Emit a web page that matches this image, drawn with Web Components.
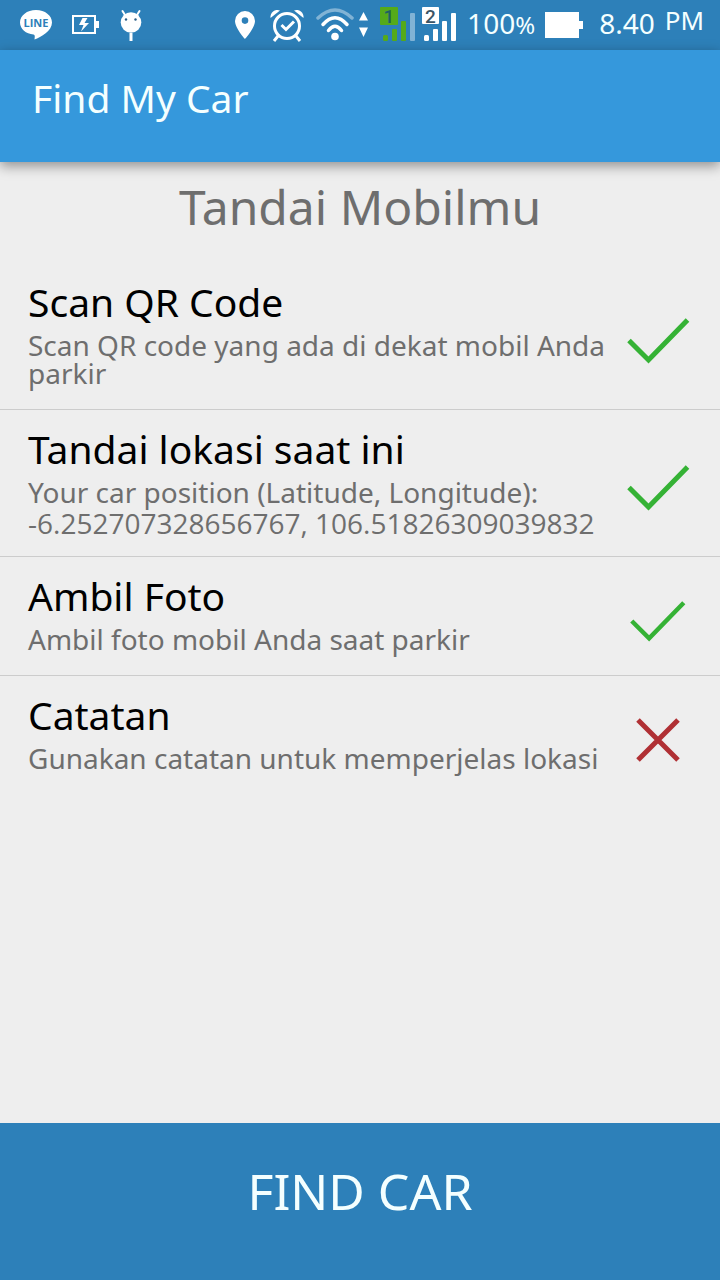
<!DOCTYPE html>
<html lang="id">
<head>
<meta charset="utf-8">
<meta name="viewport" content="width=device-width, initial-scale=1">
<title>Find My Car</title>
<style>
  html, body {
    margin: 0;
    min-height: 100%;
  }
  body {
    font-family: "Noto Sans", "Open Sans", sans-serif;
    background-color: #eeeeee;
    color: #000;
  }
</style>
</head>
<body>
<find-car-app></find-car-app>

<script>
class StatusBar extends HTMLElement {
  constructor() {
    super();
    this.attachShadow({ mode: 'open' });
  }

  connectedCallback() {
    this.render();
  }

  render() {
    this.shadowRoot.innerHTML = `
      <style>
        :host {
          display: flex;
          justify-content: space-between;
          height: 50px;
          padding: 0 16px 0 20px;
          background-color: #2d80b9;
          color: #f4ffff;
          font-size: 28px;
          line-height: 46px;
        }
        div {
          display: flex;
        }
        .left {
          gap: 20px;
        }
        .right {
          gap: 10px;
        }
        svg {
          display: block;
          height: 50px;
          fill: #fff;
        }
        small {
          font-size: 24px;
        }
        .battery {
          margin-right: 6px;
        }
        .period {
          font-size: 26px;
          line-height: 40px;
        }
      </style>
      <div class="left">
        <svg width="32" viewBox="0 0 32 50">
          <path d="M16 10C7 10 0 15.500 0 22.500C0 29 6 34 13.500 34.500C15 35 15 36 14.500 39.500C21 37 32 31 32 22.500C32 15.500 25 10 16 10Z"/>
          <text x="16" y="26.500" text-anchor="middle" font-size="11" font-weight="bold" fill="#2d80b9" font-family="Open Sans">LINE</text>
        </svg>
        <svg width="28" viewBox="2 0 28 50">
          <path fill="none" stroke="#fff" stroke-width="2" d="M2 16H24V33H2Z" transform="translate(1)"/>
          <path d="M25 21h4v7h-4zM12.500 18h5l-3 5h4.500l-8 8.500 2.500-6.500H9z"/>
        </svg>
        <svg width="22" viewBox="0 0 22 50">
          <circle cx="11" cy="22.500" r="10.300"/>
          <path stroke="#fff" stroke-width="2" stroke-linecap="round" d="M5 15L2.500 11M17 15L19.500 11"/>
          <path d="M9.500 33h3v8h-3z"/>
          <g fill="#2d6088"><circle cx="6" cy="19.500" r="1.200"/><circle cx="15.500" cy="19.500" r="1.200"/></g>
        </svg>
      </div>
      <div class="right">
        <svg width="223" viewBox="0 0 223 50">
          <path fill-rule="evenodd" d="M11 11A10 10 0 0 0 1 21C1 28 11 39 11 39S21 28 21 21A10 10 0 0 0 11 11ZM11 17.300A3.300 3.300 0 1 1 11 23.900A3.300 3.300 0 0 1 11 17.300Z"/>
          <g fill="none" stroke="#fff" stroke-width="3">
            <circle cx="53" cy="26" r="12.500"/>
            <path d="M44 36l-4 5M62 36l4 5M47.500 25l4.500 4.500 8-8"/>
          </g>
          <path d="M36.500 18A7 7 0 0 1 46 10.500ZM69.500 18A7 7 0 0 0 60 10.500Z"/>
          <circle cx="101" cy="36.500" r="3.800"/>
          <g fill="none" stroke="#fff" stroke-width="3.500" stroke-linecap="round">
            <path opacity=".4" d="M84 18Q101 2 118 18"/>
            <path d="M89 24.500Q101 11 113 24.500M94.500 30.500Q101 22 107.500 30.500"/>
          </g>
          <path d="M129.500 12l4.500 8.500h-9zM129.500 37l4.500-9.500h-9z"/>
          <g fill="#55aa1a">
            <rect x="146" y="7" width="18" height="18" rx="1"/>
            <rect x="149" y="35" width="5" height="6" rx="1.500"/>
            <rect x="158" y="29" width="5" height="12" rx="1"/>
            <rect x="167" y="21" width="5" height="20" rx="1"/>
          </g>
          <rect x="176" y="13" width="5" height="28" rx="1" opacity=".4"/>
          <rect x="188" y="7" width="17" height="17" rx="1"/>
          <rect x="190" y="35" width="5" height="6" rx="1.500"/>
          <rect x="199" y="29" width="5" height="12" rx="1"/>
          <rect x="208" y="21" width="5" height="20" rx="1"/>
          <rect x="217" y="13" width="5" height="28" rx="1"/>
          <g font-family="Roboto" font-size="19" font-weight="500" text-anchor="middle">
            <text x="155" y="22.500" fill="#1f5f63">1</text>
            <text x="196.500" y="22.500" fill="#3b5566">2</text>
          </g>
        </svg>
        <span>100<small>%</small></span>
        <svg class="battery" width="38" viewBox="0 0 38 50">
          <path d="M0 12h34v9h4v8h-4v9H0z"/>
        </svg>
        <span>8.40</span>
        <span class="period">PM</span>
      </div>
    `;
  }
}

class AppHeader extends HTMLElement {
  constructor() {
    super();
    this.attachShadow({ mode: 'open' });
  }

  connectedCallback() {
    this.render();
  }

  render() {
    this.shadowRoot.innerHTML = `
      <style>
        :host {
          display: block;
          padding: 24px 32px 40px;
          background-color: #3598dc;
          color: #f4ffff;
          box-shadow: 0 4px 12px rgba(0, 0, 0, 0.4);
        }
        h1 {
          margin: 0;
          font-size: 39px;
          font-weight: normal;
          line-height: 48px;
        }
      </style>
      <h1><slot></slot></h1>
    `;
  }
}

class MarkStep extends HTMLElement {
  constructor() {
    super();
    this.attachShadow({ mode: 'open' });
  }

  connectedCallback() {
    this.render();
  }

  // green tick when the step is done, red cross when not
  icon() {
    const size = this.hasAttribute('small') ? 56 : 63;
    if (this.hasAttribute('done')) {
      return `<svg width="${size}" height="${size}" viewBox="0 0 63 63">
        <path stroke="#35b235" d="M2 31.500L21.500 51L60.500 11"/>
      </svg>`;
    }
    return `<svg width="${size}" height="${size}" viewBox="0 0 56 56">
      <path stroke="#b03034" d="M8 8L48 48M48 8L8 48"/>
    </svg>`;
  }

  render() {
    this.shadowRoot.innerHTML = `
      <style>
        :host {
          display: block;
          border-bottom: 1px solid #cccccc;
        }
        :host(:last-of-type) {
          border-bottom: none;
        }
        button {
          display: flex;
          width: 100%;
          margin: 0;
          padding: 17px 16px 22px 28px;
          border: none;
          background: none;
          color: inherit;
          font: inherit;
          text-align: left;
          align-items: center;
          cursor: pointer;
        }
        .body {
          flex: 1;
        }
        .title, .info {
          display: block;
        }
        .title {
          margin-bottom: 7px;
          font-size: 39px;
          line-height: 44px;
        }
        .info {
          color: #6e6e6e;
          font-size: 28px;
          line-height: 28px;
        }
        ::slotted([slot="value"]) {
          display: block;
          margin-bottom: -6px;
          font-family: "Open Sans", sans-serif;
          line-height: 34px;
        }
        .state {
          display: flex;
          width: 92px;
          margin-top: 14px;
          justify-content: center;
        }
        svg {
          fill: none;
          stroke-width: 5;
        }
      </style>
      <button type="button">
        <span class="body">
          <span class="title"><slot name="title"></slot></span>
          <span class="info"><slot></slot><slot name="value"></slot></span>
        </span>
        <span class="state">${this.icon()}</span>
      </button>
    `;
  }
}

class FindButton extends HTMLElement {
  constructor() {
    super();
    this.attachShadow({ mode: 'open' });
  }

  connectedCallback() {
    this.render();
  }

  render() {
    this.shadowRoot.innerHTML = `
      <style>
        :host {
          display: block;
        }
        button {
          display: block;
          width: 100%;
          padding: 36px 0 57px;
          border: none;
          background-color: #2d80b9;
          color: #f4ffff;
          font: inherit;
          font-size: 50px;
          line-height: 64px;
          cursor: pointer;
        }
      </style>
      <button type="button"><slot></slot></button>
    `;
  }
}

class FindCarApp extends HTMLElement {
  constructor() {
    super();
    this.attachShadow({ mode: 'open' });
  }

  connectedCallback() {
    this.render();
  }

  render() {
    this.shadowRoot.innerHTML = `
      <style>
        :host {
          display: flex;
          flex-direction: column;
          min-height: 100vh;
        }
        main {
          flex: 1;
        }
        h2 {
          margin: 0;
          padding: 13px 0 24px;
          color: #6e6e6e;
          font-size: 48px;
          font-weight: normal;
          line-height: 64px;
          text-align: center;
        }
      </style>
      <status-bar></status-bar>
      <app-header>Find My Car</app-header>
      <main>
        <h2>Tandai Mobilmu</h2>
        <mark-step done>
          <span slot="title">Scan QR Code</span>
          Scan QR code yang ada di dekat mobil Anda parkir
        </mark-step>
        <mark-step done>
          <span slot="title">Tandai lokasi saat ini</span>
          Your car position (Latitude, Longitude):
          <span slot="value">-6.252707328656767, 106.51826309039832</span>
        </mark-step>
        <mark-step done small>
          <span slot="title">Ambil Foto</span>
          Ambil foto mobil Anda saat parkir
        </mark-step>
        <mark-step small>
          <span slot="title">Catatan</span>
          Gunakan catatan untuk memperjelas lokasi
        </mark-step>
      </main>
      <find-button>FIND CAR</find-button>
    `;
  }
}

customElements.define('status-bar', StatusBar);
customElements.define('app-header', AppHeader);
customElements.define('mark-step', MarkStep);
customElements.define('find-button', FindButton);
customElements.define('find-car-app', FindCarApp);
</script>
</body>
</html>
